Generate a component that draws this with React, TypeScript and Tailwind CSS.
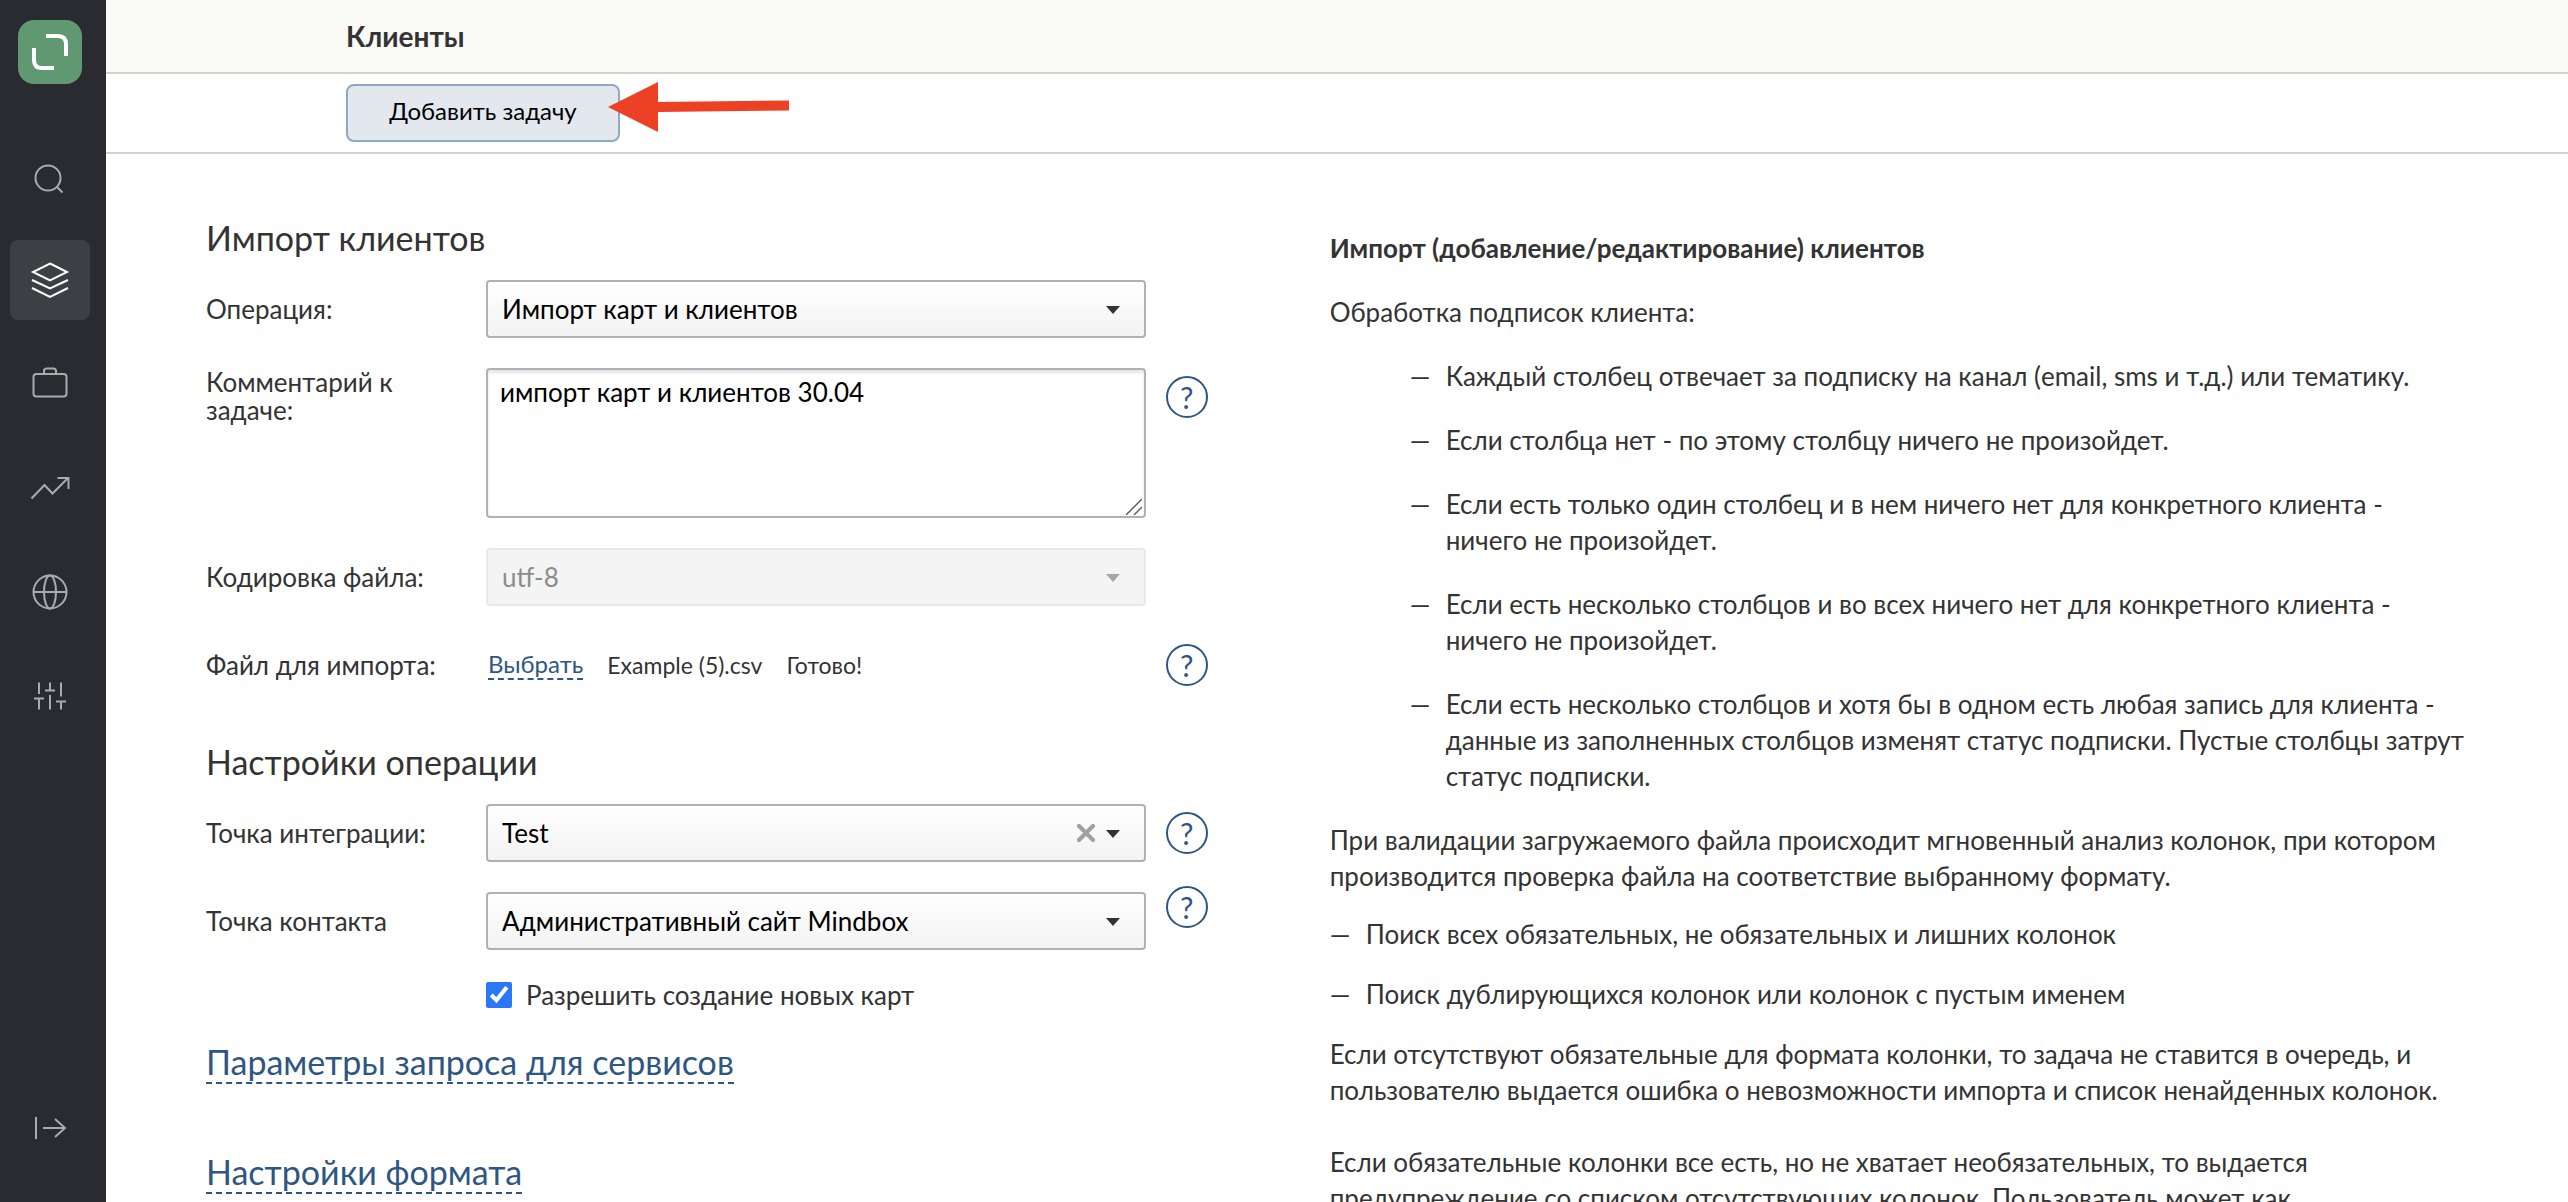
import React, { useState } from 'react';

interface RowProps {
    label?: React.ReactNode;
    htmlFor?: string;
    help?: 'center' | 'top' | 'raised';
    multiline?: boolean;
    children: React.ReactNode;
}

interface SelectFieldProps {
    id: string;
    value: string;
    disabled?: boolean;
    onClear?: () => void;
}

const navIcons = [
    {
        title: 'Поиск',
        drawing: (
            <>
                <circle cx="18" cy="22" r="12.5" />
                <path d="M27 31l5.5 5.5" />
            </>
        ),
    },
    {
        title: 'Данные',
        active: true,
        drawing: <path d="M20 3.5L37 12l-17 8.5L3 12zM2 20l18 8.5L38 20M2 28l18 9 18-9" />,
    },
    {
        title: 'Кампании',
        drawing: (
            <>
                <rect x="3.5" y="10" width="33" height="22.5" rx="3" />
                <path d="M14 10V7q0-2.5 2.5-2.5h7q2.5 0 2.5 2.5v3" />
            </>
        ),
    },
    {
        title: 'Отчёты',
        drawing: <path d="M1.5 30.5l13-13.5 8 8.5L38 10M27.5 10h11v11" />,
    },
    {
        title: 'Интеграции',
        drawing: (
            <>
                <circle cx="20" cy="20" r="16.5" />
                <ellipse cx="20" cy="20" rx="6" ry="16.5" />
                <path d="M3.5 20h33" />
            </>
        ),
    },
    {
        title: 'Настройки',
        drawing: <path d="M9 6.5V18M4 22.5h10M9 22.5v11M20 6.5v8M15 14.5h10M20 19v14.5M31 6.5v14M26 25.5h10M31 25.5v8" />,
    },
];

const subscriptionRules = [
    'Каждый столбец отвечает за подписку на канал (email, sms и т.д.) или тематику.',
    'Если столбца нет - по этому столбцу ничего не произойдет.',
    'Если есть только один столбец и в нем ничего нет для конкретного клиента - ничего не произойдет.',
    'Если есть несколько столбцов и во всех ничего нет для конкретного клиента - ничего не произойдет.',
    'Если есть несколько столбцов и хотя бы в одном есть любая запись для клиента - данные из заполненных столбцов изменят статус подписки. Пустые столбцы затрут статус подписки.',
];

const validationChecks = [
    'Поиск всех обязательных, не обязательных и лишних колонок',
    'Поиск дублирующихся колонок или колонок с пустым именем',
];

const NavIcon = ({ children }: { children: React.ReactNode }) => (
    <svg viewBox="0 0 40 40" className="w-10 h-10" fill="none" stroke="currentColor" strokeWidth="2">
        {children}
    </svg>
);

const Sidebar = () => (
    <nav className="w-[106px] shrink-0 bg-[#2a2b30] flex flex-col pl-2.5 pt-5 pb-[34px] text-[#a9abad]">
        <a href="#home" title="Главная" className="ml-2 mb-13 w-16 h-16">
            <svg viewBox="0 0 64 64" className="w-16 h-16">
                <rect width="64" height="64" rx="16" fill="#5f9871" />
                <path d="M28 16h12q8 0 8 8v12M16 28v12q0 8 8 8h12" fill="none" stroke="#fff" strokeWidth="4" />
            </svg>
        </a>
        <div className="flex flex-col gap-6">
            {navIcons.map(item => (
                <a
                    key={item.title}
                    href="#nav"
                    title={item.title}
                    className={`w-20 h-20 rounded-lg flex items-center justify-center ${item.active ? 'bg-[#3c3f44] text-white' : ''}`}
                >
                    <NavIcon>{item.drawing}</NavIcon>
                </a>
            ))}
        </div>
        <button title="Развернуть" className="mt-auto w-20 h-20 flex items-center justify-center">
            <NavIcon>
                <path d="M6 9v22M13 20h22M25 11l10 9-10 9" />
            </NavIcon>
        </button>
    </nav>
);

const Row = ({ label, htmlFor, help, multiline, children }: RowProps) => (
    <div className={`grid grid-cols-[280px_1fr_62px] ${multiline ? 'items-start' : 'items-center'}`}>
        <label htmlFor={htmlFor} className={multiline ? 'leading-7 pr-14' : ''}>{label}</label>
        {children}
        {help && (
            <button
                type="button"
                title="Справка"
                className={`justify-self-end w-[42px] h-[42px] rounded-full border-2 border-[#2f5682] text-[#2f5682] text-[30px] leading-none flex items-center justify-center ${help === 'top' ? 'mt-2' : ''} ${help === 'raised' ? 'self-start -mt-1.5' : ''}`}
            >
                ?
            </button>
        )}
    </div>
);

const SelectField = ({ id, value, disabled, onClear }: SelectFieldProps) => (
    <div className="relative">
        <select
            id={id}
            disabled={disabled}
            defaultValue={value}
            className="appearance-none w-full h-[58px] pl-3.5 pr-20 border-2 border-[#b0b0b6] rounded text-black bg-linear-to-b from-white to-[#f3f3f3] disabled:opacity-100 disabled:border-[#e8e8e8] disabled:bg-none disabled:bg-[#f4f4f4] disabled:text-[#8c8c8c]"
        >
            <option>{value}</option>
        </select>
        {onClear && (
            <button type="button" title="Очистить" onClick={onClear} className="absolute right-[51px] top-5 w-[18px] h-[18px] text-[#a0a0a0]">
                <svg viewBox="0 0 18 18" fill="none" stroke="currentColor" strokeWidth="4.2" strokeLinecap="round">
                    <path d="M2 2l14 14M16 2L2 16" />
                </svg>
            </button>
        )}
        <svg viewBox="0 0 14 8" className={`absolute right-[26px] top-[26px] w-3.5 h-2 pointer-events-none ${disabled ? 'text-[#a6a6a6]' : 'text-[#333]'}`}>
            <path d="M0 0h14L7 8z" fill="currentColor" />
        </svg>
    </div>
);

const DashList = ({ items, className }: { items: string[]; className: string }) => (
    <ul className={`flex flex-col ${className}`}>
        {items.map(item => (
            <li key={item} className="flex">
                <span className="w-9 shrink-0">—</span>
                <span>{item}</span>
            </li>
        ))}
    </ul>
);

const ImportForm = () => {
    const [comment, setComment] = useState('импорт карт и клиентов 30.04');
    const [allowNewCards, setAllowNewCards] = useState(true);

    return (
        <form className="pt-16">
            <h2 className="text-[34px] leading-10 mb-[22px]">Импорт клиентов</h2>
            <div className="flex flex-col gap-[30px]">
                <Row label="Операция:" htmlFor="operation">
                    <SelectField id="operation" value="Импорт карт и клиентов" />
                </Row>
                <Row label="Комментарий к задаче:" htmlFor="comment" help="top" multiline>
                    <div className="relative flex">
                        <textarea
                            id="comment"
                            value={comment}
                            onChange={e => setComment(e.target.value)}
                            className="w-full h-[150px] px-3 py-1.5 leading-8 border-2 border-[#b0b0b6] rounded bg-white text-black resize-none shadow-[inset_0_3px_3px_#0000001a]"
                        />
                        <svg viewBox="0 0 16 16" className="absolute right-1 bottom-[3px] w-4 h-4 pointer-events-none" stroke="#555" strokeWidth="1.4">
                            <path d="M0 16L16 0M8 16l8-8" />
                        </svg>
                    </div>
                </Row>
                <Row label="Кодировка файла:" htmlFor="encoding">
                    <SelectField id="encoding" value="utf-8" disabled />
                </Row>
                <Row label="Файл для импорта:" htmlFor="file" help="center">
                    <div className="flex items-center gap-6 h-[58px] pl-0.5 text-[23px]">
                        <button type="button" id="file" className="text-2xl leading-7 text-[#2f5682] border-b-2 border-dashed border-[#2f5682]">
                            Выбрать
                        </button>
                        <span>Example (5).csv</span>
                        <span>Готово!</span>
                    </div>
                </Row>
            </div>

            <h2 className="text-[34px] leading-10 mt-12 mb-[22px]">Настройки операции</h2>
            <div className="flex flex-col gap-[30px]">
                <Row label="Точка интеграции:" htmlFor="integration" help="center">
                    <SelectField id="integration" value="Test" onClear={() => {}} />
                </Row>
                <Row label="Точка контакта" htmlFor="contact" help="raised">
                    <SelectField id="contact" value="Административный сайт Mindbox" />
                </Row>
                <label className="ml-[280px] h-[30px] flex items-center gap-3.5">
                    <input
                        type="checkbox"
                        checked={allowNewCards}
                        onChange={e => setAllowNewCards(e.target.checked)}
                        className="w-[26px] h-[26px] accent-[#2878f8]"
                    />
                    Разрешить создание новых карт
                </label>
            </div>

            <div className="mt-8 flex flex-col items-start gap-17 text-[34px] leading-10 text-[#2f5682]">
                <a href="#params" className="border-b-2 border-dashed border-[#2f5682]">Параметры запроса для сервисов</a>
                <a href="#format" className="border-b-2 border-dashed border-[#2f5682]">Настройки формата</a>
            </div>
        </form>
    );
};

const ImportHelp = () => (
    <section className="pt-19 leading-9">
        <h3 className="font-bold mb-7">Импорт (добавление/редактирование) клиентов</h3>
        <p className="mb-7">Обработка подписок клиента:</p>
        <DashList items={subscriptionRules} className="pl-20 gap-7 mb-7" />
        <p className="mb-[22px]">
            При валидации загружаемого файла происходит мгновенный анализ колонок, при котором производится проверка файла на соответствие выбранному формату.
        </p>
        <DashList items={validationChecks} className="gap-6 mb-6" />
        <p className="mb-9">
            Если отсутствуют обязательные для формата колонки, то задача не ставится в очередь, и пользователю выдается ошибка о невозможности импорта и список ненайденных колонок.
        </p>
        <p>
            Если обязательные колонки все есть, но не хватает необязательных, то выдается
            <br />
            предупреждение со списком отсутствующих колонок. Пользователь может как
        </p>
    </section>
);

const App: React.FC = () => (
    <div className="flex h-screen overflow-hidden bg-white text-[#333] text-[26px] font-['Lato',sans-serif]">
        <Sidebar />
        <div className="flex-1 min-w-0">
            <header className="h-[74px] pl-60 flex items-center bg-[#fafaf6] border-b-2 border-[#d2d2d2]">
                <h1 className="text-[28px] font-bold">Клиенты</h1>
            </header>
            <div className="h-20 pl-60 flex items-center border-b-2 border-[#d2d2d2]">
                <div className="relative">
                    <button className="w-[274px] h-[58px] pb-1 rounded-lg border-2 border-[#8fa9c0] bg-[#e2e8ee] text-black text-2xl">
                        Добавить задачу
                    </button>
                    {/* Arrow pointing at the button */}
                    <svg viewBox="0 0 182 50" className="absolute left-[262px] -top-0.5 w-[182px] h-[50px] pointer-events-none" fill="#ec4125">
                        <path d="M0 25L50 0v20l131-1.5v10L50 30v20z" />
                    </svg>
                </div>
            </div>
            <main className="grid grid-cols-[22fr_25fr] gap-x-[122px] pl-25 pr-25">
                <ImportForm />
                <ImportHelp />
            </main>
        </div>
    </div>
);

export default App;
